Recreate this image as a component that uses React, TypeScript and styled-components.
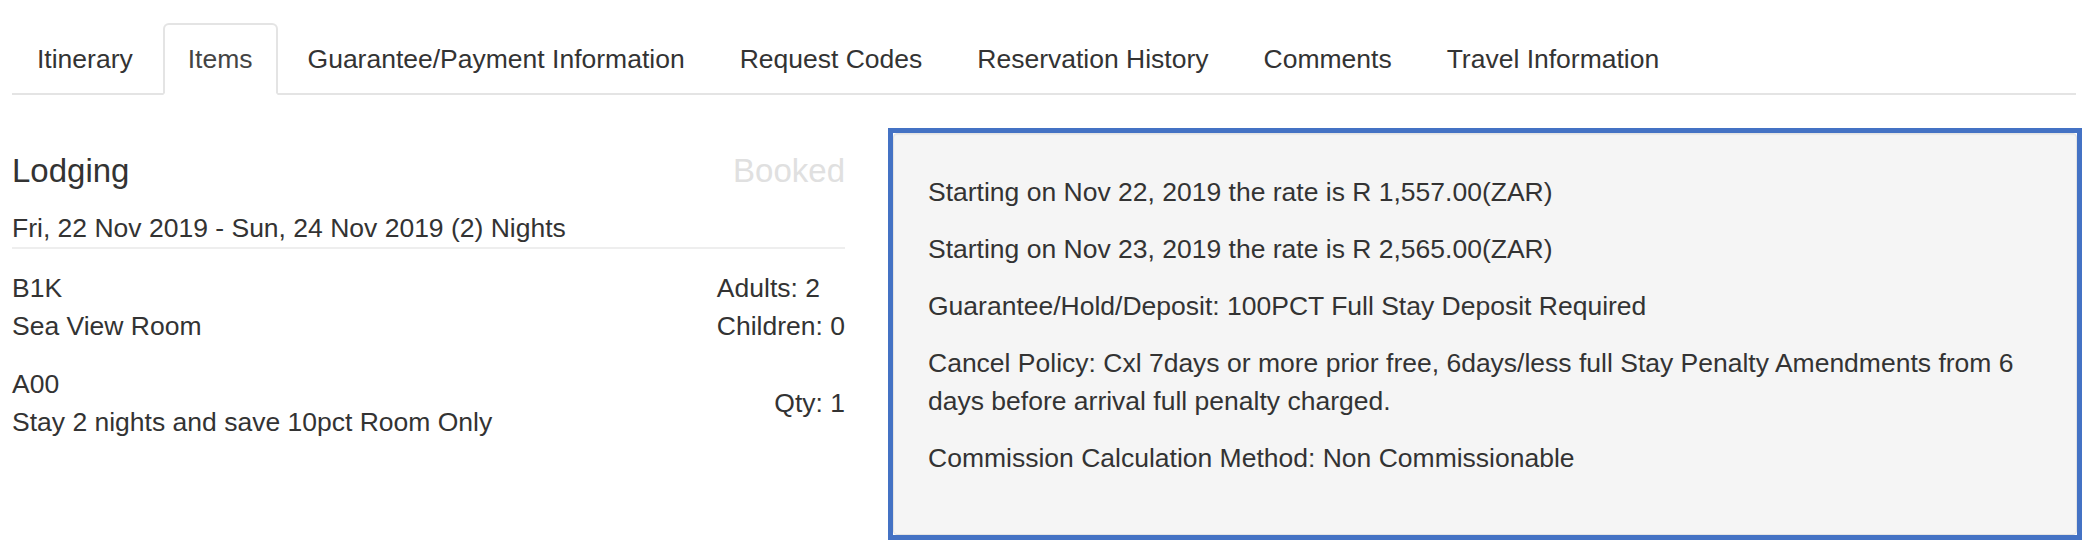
import styled, { createGlobalStyle, css } from "styled-components";

const GlobalStyle = createGlobalStyle`
  * { box-sizing: border-box; }
  body {
    margin: 0;
    background: #fff;
    color: #333;
    font-family: "Liberation Sans", Arial, sans-serif;
    font-size: 26.5px;
    line-height: 38px;
  }
`;

const Page = styled.div`
  padding: 23px 5px 0 12px;
`;

const TabList = styled.ul`
  display: flex;
  list-style: none;
  margin: 0 6px 0 0;
  padding: 0;
  border-bottom: 2px solid #e4e4e4;
`;

const Tab = styled.li<{ $active?: boolean }>`
  margin: 0 5px -2px 0;
  padding: 15px 23px;
  border: 2px solid transparent;
  border-radius: 6px 6px 0 0;
  color: #333;
  white-space: nowrap;
  ${(p) =>
    p.$active &&
    css`
      border-color: #e4e4e4 #e4e4e4 transparent;
      background: #fff;
      color: #444;
    `}
`;

const Content = styled.div`
  display: grid;
  grid-template-columns: 833px 1fr;
  column-gap: 43px;
  margin-top: 33px;
`;

const Lodging = styled.section`
  padding-top: 25px;
`;

const Header = styled.div`
  display: flex;
  justify-content: space-between;
  align-items: baseline;
`;

const Title = styled.h4`
  margin: 0;
  font-size: 33px;
  font-weight: normal;
  line-height: 36px;
`;

const Status = styled.span`
  font-size: 33px;
  line-height: 36px;
  color: #e0e0e0;
`;

const Dates = styled.div`
  margin-top: 20px;
  border-bottom: 2px solid #eeeeee;
`;

const ItemRow = styled.div<{ $center?: boolean }>`
  display: flex;
  justify-content: space-between;
  align-items: ${(p) => (p.$center ? "center" : "flex-start")};
  margin-top: 20px;
`;

const Stack = styled.div`
  display: flex;
  flex-direction: column;
`;

const Well = styled.div`
  border: 5px solid #4472c4;
`;

const WellInner = styled.div`
  background: #f5f5f5;
  border: 1px solid #e3e3e3;
  border-radius: 4px;
  box-shadow: inset 0 1px 1px rgba(0, 0, 0, 0.05);
  padding: 39px 34px 38px;
`;

const Note = styled.p`
  margin: 0 0 19px;
`;

const tabs = [
  "Itinerary",
  "Items",
  "Guarantee/Payment Information",
  "Request Codes",
  "Reservation History",
  "Comments",
  "Travel Information",
];

const notes = [
  "Starting on Nov 22, 2019 the rate is R 1,557.00(ZAR)",
  "Starting on Nov 23, 2019 the rate is R 2,565.00(ZAR)",
  "Guarantee/Hold/Deposit: 100PCT Full Stay Deposit Required",
  "Cancel Policy: Cxl 7days or more prior free, 6days/less full Stay Penalty Amendments from 6 days before arrival full penalty charged.",
  "Commission Calculation Method: Non Commissionable",
];

const App = () => {
  return (
    <>
      <GlobalStyle />
      <Page>
        <TabList>
          {tabs.map((t) => (
            <Tab key={t} $active={t === "Items"}>
              {t}
            </Tab>
          ))}
        </TabList>

        <Content>
          <Lodging>
            <Header>
              <Title>Lodging</Title>
              <Status>Booked</Status>
            </Header>
            <Dates>Fri, 22 Nov 2019 - Sun, 24 Nov 2019 (2) Nights</Dates>

            <ItemRow>
              <Stack>
                <span>B1K</span>
                <span>Sea View Room</span>
              </Stack>
              <Stack>
                <span>Adults: 2</span>
                <span>Children: 0</span>
              </Stack>
            </ItemRow>

            <ItemRow $center>
              <Stack>
                <span>A00</span>
                <span>Stay 2 nights and save 10pct Room Only</span>
              </Stack>
              <span>Qty: 1</span>
            </ItemRow>
          </Lodging>

          <Well>
            <WellInner>
              {notes.map((n) => (
                <Note key={n}>{n}</Note>
              ))}
            </WellInner>
          </Well>
        </Content>
      </Page>
    </>
  );
};

export default App;
